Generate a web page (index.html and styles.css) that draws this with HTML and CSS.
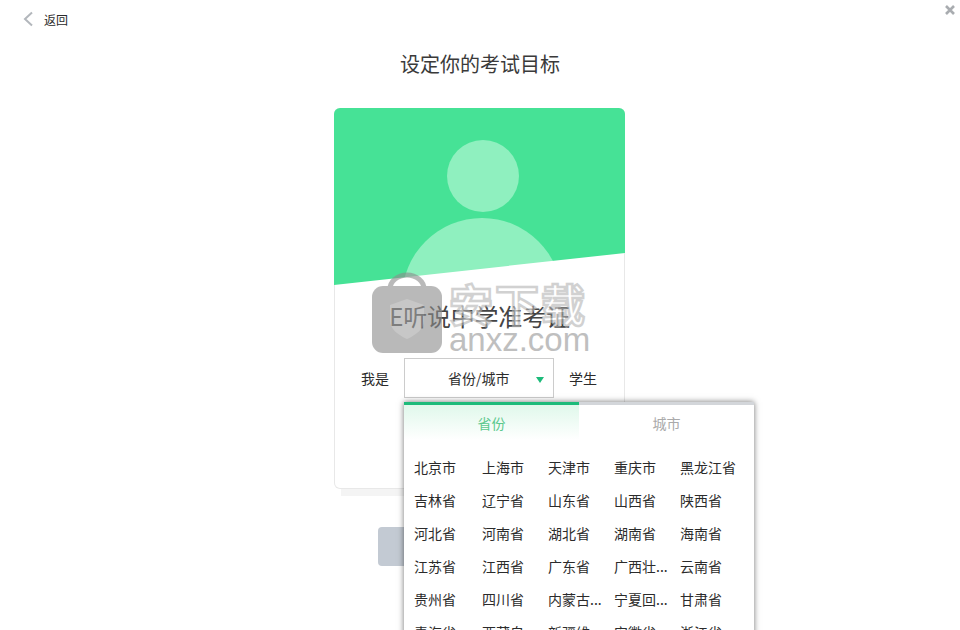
FILE: index.html
```html
<!DOCTYPE html>
<html lang="zh-CN">
<head>
    <meta charset="UTF-8">
    <title>设定你的考试目标</title>
    <link rel="stylesheet" href="styles.css">
</head>
<body>
    <div class="page">
        <div class="topbar">
            <a class="back">
                <svg width="12" height="16" viewBox="0 0 12 16"><path d="M10 1.500 3 8l7 6.500" fill="none" stroke="#b3b7bc" stroke-width="2"/></svg>
                <span>返回</span>
            </a>
            <svg class="close" width="12" height="12" viewBox="0 0 12 12"><path d="M2 2l8 8M10 2l-8 8" fill="none" stroke="#a9acb0" stroke-width="2.600"/></svg>
        </div>

        <h1 class="title">设定你的考试目标</h1>

        <div class="card">
            <div class="card-head">
                <svg width="291" height="177" viewBox="0 0 291 177">
                    <rect width="291" height="177" fill="#46e296"/>
                    <circle cx="149" cy="68" r="36" fill="#8ff0bf"/>
                    <circle cx="148" cy="190" r="80" fill="#8ff0bf"/>
                    <polygon points="0,177 291,145 291,177" fill="#fff"/>
                    <rect x="290" y="145" width="1" height="32" fill="#e8e8e8"/>
                </svg>
            </div>
            <div class="card-name">E听说中学准考证</div>
            <div class="pick-row">
                <span>我是</span>
                <div class="select">
                    <span class="select-text">省份/城市</span>
                    <i class="arrow"></i>
                    <div class="dropdown">
                        <div class="tabs">
                            <div class="tab active">省份</div>
                            <div class="tab">城市</div>
                        </div>
                        <div class="regions">
                            <span>北京市</span><span>上海市</span><span>天津市</span><span>重庆市</span><span>黑龙江省</span>
                            <span>吉林省</span><span>辽宁省</span><span>山东省</span><span>山西省</span><span>陕西省</span>
                            <span>河北省</span><span>河南省</span><span>湖北省</span><span>湖南省</span><span>海南省</span>
                            <span>江苏省</span><span>江西省</span><span>广东省</span><span>广西壮...</span><span>云南省</span>
                            <span>贵州省</span><span>四川省</span><span>内蒙古...</span><span>宁夏回...</span><span>甘肃省</span>
                            <span>青海省</span><span>西藏自...</span><span>新疆维...</span><span>安徽省</span><span>浙江省</span>
                        </div>
                    </div>
                </div>
                <span>学生</span>
            </div>
        </div>

        <button class="next"></button>

        <!-- watermark over the card -->
        <div class="watermark">
            <svg width="72" height="82" viewBox="0 0 72 82">
                <path d="M19 20V17a17 14 0 0 1 34 0v3" fill="none" stroke="#8c8c8c" stroke-width="5"/>
                <rect x="1" y="14" width="70" height="67" rx="11" fill="#8c8c8c"/>
                <path d="M36 27l17 6v15c0 9-8 15-17 19-9-4-17-10-17-19V33z" fill="#a3a3a3"/>
            </svg>
            <div class="wm-text">
                <div class="wm-cn">安下载</div>
                <div class="wm-en">anxz.com</div>
            </div>
        </div>
    </div>
</body>
</html>
```

FILE: styles.css
```css
* {
    box-sizing: border-box;
}
html, body {
    margin: 0;
    height: 100%;
    overflow: hidden;
    background: #fff;
}
body {
    font-family: "Noto Sans CJK SC", "Liberation Sans", sans-serif;
    color: #2b2b2b;
}
.page {
    position: relative;
    width: 960px;
    height: 630px;
    overflow: hidden;
    display: flex;
    flex-direction: column;
    align-items: center;
}
.topbar {
    width: 100%;
    height: 38px;
    padding: 0 4px 0 22px;
    display: flex;
    justify-content: space-between;
    align-items: flex-start;
}
.back {
    display: flex;
    align-items: center;
    gap: 10px;
    height: 38px;
    font-size: 12px;
}
.close {
    margin-top: 4px;
}
.title {
    margin: 0;
    height: 70px;
    line-height: 52px;
    font-size: 20px;
    font-weight: normal;
    color: #3a3a3a;
}
.card {
    width: 291px;
    height: 381px;
    margin-left: -1px;
    border: 1px solid #e8e8e8;
    border-top: none;
    border-radius: 6px;
    background: #fff;
    box-shadow: 0 14px 0 -7px #f4f4f4;
}
.card-head {
    height: 177px;
    margin: 0 -1px;
    overflow: hidden;
    border-radius: 6px 6px 0 0;
}
.card-head svg {
    display: block;
}
.card-name {
    margin-top: 14px;
    height: 34px;
    line-height: 34px;
    text-align: center;
    font-size: 24px;
    letter-spacing: -0.200px;
    color: #444;
}
.pick-row {
    margin-top: 25px;
    padding-left: 26px;
    display: flex;
    align-items: center;
    gap: 15px;
    font-size: 14px;
}
.select {
    position: relative;
    width: 150px;
    height: 40px;
    border: 1px solid #ccc;
    display: flex;
    align-items: center;
    padding-left: 43px;
}
.arrow {
    position: absolute;
    right: 9px;
    top: 18px;
    border: 4px solid transparent;
    border-top: 6px solid #1dbb7a;
    border-bottom: none;
}
.dropdown {
    position: absolute;
    left: -1px;
    top: 43px;
    width: 350px;
    height: 260px;
    background: #fff;
    box-shadow: 0 0 6px rgba(0, 0, 0, 0.55);
}
.tabs {
    display: flex;
    height: 38px;
}
.tab {
    width: 175px;
    text-align: center;
    border-top: 3px solid #d3d6da;
    line-height: 37px;
    font-size: 14px;
    color: #aaa;
}
.tab.active {
    color: #5cc98e;
    border-top-color: #1dbb7a;
    background: linear-gradient(#e0f8eb, #fff);
}
.regions {
    display: grid;
    grid-template-columns: 68px 66px 66px 66px 66px;
    grid-auto-rows: 33px;
    padding: 11px 0 0 10px;
}
.regions span {
    line-height: 33px;
    font-size: 14px;
    white-space: nowrap;
}
.next {
    width: 204px;
    height: 39px;
    margin-top: 38px;
    border: none;
    border-radius: 4px;
    background: #c3cad3;
}
.watermark {
    position: absolute;
    left: 371px;
    top: 272px;
    display: flex;
    gap: 6px;
    opacity: 0.6;
    pointer-events: none;
}
.wm-text {
    margin-top: 11px;
}
.wm-cn {
    height: 40px;
    line-height: 40px;
    font-size: 44px;
    font-weight: bold;
    letter-spacing: 2px;
    color: #fff;
    -webkit-text-stroke: 2.500px #b4b4b4;
}
.wm-en {
    margin-top: 1px;
    height: 32px;
    line-height: 32px;
    font-family: "Liberation Sans", sans-serif;
    font-size: 33px;
    color: #959595;
}
```
